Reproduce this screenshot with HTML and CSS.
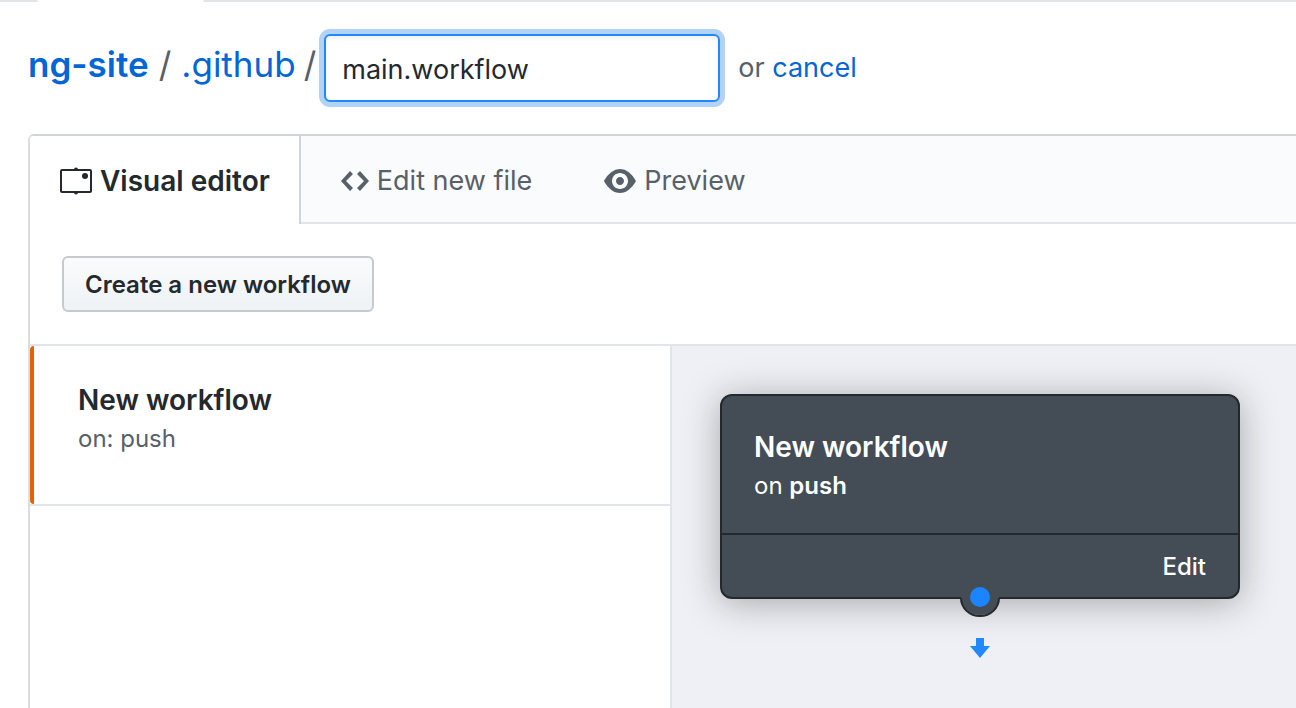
FILE: index.html
```html
<!DOCTYPE html>
<html lang="en">
<head>
<meta charset="utf-8">
<meta name="viewport" content="width=device-width, initial-scale=1">
<title>main.workflow</title>
<link rel="stylesheet" href="styles.css">
</head>
<body>
<div class="page">
  <div class="topnav"><span class="topnav-before"></span><span class="topnav-current"></span><span class="topnav-after"></span></div>
  <form class="breadcrumb">
    <nav class="path" aria-label="Path">
      <a class="repo" href="#">ng-site</a><span class="sep">/</span><a href="#">.github</a><span class="sep">/</span>
    </nav>
    <input class="filename" type="text" value="main.workflow" aria-label="File name">
    <span class="cancel">or <a href="#">cancel</a></span>
  </form>
  <main class="editor">
    <div class="tabs">
      <button class="tab tab-selected" type="button">
        <svg width="32" height="28" viewBox="0 0 32 28" aria-hidden="true"><rect x="1" y="3" width="30" height="22" rx="1" fill="none" stroke="currentColor" stroke-width="2"/><circle cx="25" cy="9" r="3" fill="currentColor"/><path d="M14 2.500a2 2 0 0 1 4 0zM14 25.500a2 2 0 0 0 4 0z" fill="currentColor"/></svg>
        Visual editor
      </button>
      <button class="tab tab-code" type="button">
        <svg width="28" height="32" viewBox="0 0 14 16" aria-hidden="true"><path fill="currentColor" fill-rule="evenodd" d="M9.500 3L8 4.500 11.500 8 8 11.500 9.500 13 14 8 9.500 3zm-5 0L0 8l4.500 5L6 11.500 2.500 8 6 4.500 4.500 3z"/></svg>
        Edit new file
      </button>
      <button class="tab tab-preview" type="button">
        <svg width="32" height="32" viewBox="0 0 16 16" aria-hidden="true"><path fill="currentColor" fill-rule="evenodd" d="M8.060 2C3 2 0 8 0 8s3 6 8.060 6C13 14 16 8 16 8s-3-6-7.940-6zM8 12c-2.200 0-4-1.780-4-4 0-2.200 1.800-4 4-4 2.220 0 4 1.800 4 4 0 2.220-1.780 4-4 4zm2-4c0 1.110-.890 2-2 2-1.110 0-2-.890-2-2 0-1.110.890-2 2-2 1.110 0 2 .890 2 2z"/></svg>
        Preview
      </button>
    </div>
    <div class="toolbar"><button class="create" type="button">Create a new workflow</button></div>
    <div class="workspace">
      <aside class="list">
        <div class="item">
          <h2 class="title">New workflow</h2>
          <p class="event">on: push</p>
        </div>
      </aside>
      <section class="canvas">
        <article class="card">
          <div class="card-body">
            <h2 class="title">New workflow</h2>
            <p class="event">on <strong>push</strong></p>
          </div>
          <div class="card-footer"><button class="edit" type="button">Edit</button></div>
          <svg class="connector" width="40" height="64" viewBox="0 0 40 64" aria-hidden="true"><path d="M1 2a19 18 0 0 0 38 0V0H1z" fill="#444d56"/><path d="M1 3a19 18 0 0 0 38 0" fill="none" stroke="#24292e" stroke-width="2"/><circle class="dot" cx="20" cy="2" r="10"/><path class="arrow" d="M16 43h8v8h6L20 63 10 51h6z"/></svg>
        </article>
      </section>
    </div>
  </main>
</div>
</body>
</html>
```

FILE: styles.css
```css
* { box-sizing: border-box; }
body {
  margin: 0;
  background: #fff;
  color: #24292e;
  font-family: Inter, "Liberation Sans", sans-serif;
  font-size: 27px;
  line-height: 42px;
}
a { color: #0366d6; text-decoration: none; }
button, input { font: inherit; color: inherit; margin: 0; }
h2, p { margin: 0; }
.page { display: flex; flex-direction: column; min-height: 100vh; overflow: hidden; }
.topnav { display: flex; height: 2px; }
.topnav-before { width: 38px; background: #e1e4e8; border-top-right-radius: 2px; }
.topnav-current { width: 165px; }
.topnav-after { flex: 1; background: #e1e4e8; border-top-left-radius: 2px; }

.breadcrumb {
  display: flex;
  align-items: center;
  padding: 32px 28px;
}
.path {
  display: flex;
  font-size: 35px;
  line-height: 48px;
  color: #586069;
  padding-bottom: 8px;
}
.repo { font-weight: 600; }
.sep { margin: 0 10px; }
.sep:last-child { margin: 0 8px; }
.filename {
  width: 396px;
  height: 68px;
  padding: 2px 16px 0;
  border: 2px solid #2188ff;
  border-radius: 6px;
  outline: 0;
  background: #fff;
  box-shadow: inset 0 2px 4px rgba(27, 31, 35, .075), 0 0 0 5px #b2d3f5;
}
.cancel { margin-left: 18px; color: #586069; }

.editor {
  flex: 1;
  display: flex;
  flex-direction: column;
  margin-left: 28px;
  border-top: 2px solid #d1d5da;
  border-left: 2px solid #dcdddf;
  border-top-left-radius: 6px;
}
.tabs {
  display: flex;
  height: 88px;
  background: #fafbfc;
  border-top-left-radius: 4px;
  box-shadow: inset 0 -2px #e1e4e8;
}
.tab {
  display: flex;
  align-items: center;
  gap: 8px;
  padding: 2px 32px 0 40px;
  border: 0;
  background: none;
  color: #586069;
  white-space: nowrap;
}
.tab-selected {
  padding: 2px 29px 0 30px;
  background: #fff;
  border-right: 2px solid #d1d5da;
  border-top-left-radius: 4px;
  color: #24292e;
  font-size: 28px;
  font-weight: 600;
}
.toolbar { padding: 32px; border-bottom: 2px solid #e1e4e8; }
.create {
  display: block;
  height: 56px;
  padding: 2px 21px 0;
  border: 2px solid #c6cace;
  border-radius: 6px;
  background: linear-gradient(#fafbfc, #eff3f6 90%);
  font-size: 24px;
  font-weight: 600;
}
.workspace { flex: 1; display: flex; }
.list { width: 642px; flex: none; border-right: 2px solid #e1e4e8; }
.item {
  position: relative;
  height: 160px;
  padding: 34px 48px;
  border-bottom: 2px solid #e1e4e8;
}
.item::before {
  content: "";
  position: absolute;
  inset: 0 auto 0 0;
  width: 4px;
  border-radius: 4px 0 0 4px;
  background: #e36209;
}
.title { font-size: 28px; line-height: 40px; font-weight: 600; }
.event { font-size: 24px; line-height: 38px; }
.event strong { font-weight: 600; }
.item .event { color: #586069; }
.canvas { flex: 1; padding: 48px; background: #eff0f5; }
.card {
  position: relative;
  width: 520px;
  border: 2px solid #24292e;
  border-radius: 12px;
  background: #444d56;
  color: #fff;
  box-shadow: 0 4px 36px rgba(27, 31, 35, .35);
}
.card-body { height: 139px; padding: 31px 32px; border-bottom: 2px solid #24292e; }
.card-footer { display: flex; justify-content: flex-end; padding: 0 32px; height: 62px; }
.edit { padding: 2px 0 0; border: 0; background: none; font-size: 24px; font-weight: 500; }
.connector { position: absolute; top: 199px; left: 238px; overflow: visible; }
.dot { fill: #1a85ff; }
.arrow { fill: #2188ff; }
```
